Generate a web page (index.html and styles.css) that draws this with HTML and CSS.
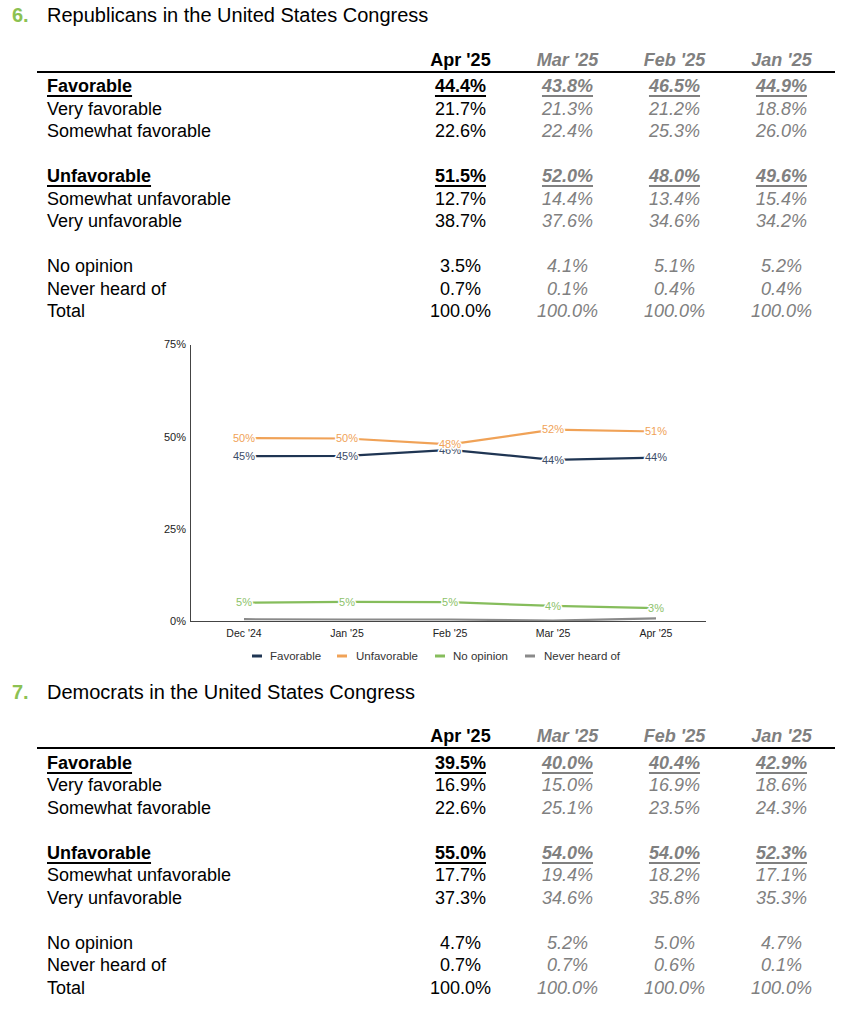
FILE: index.html
```html
<!DOCTYPE html>
<html lang="en">
<head>
<meta charset="utf-8">
<title>Congress favorability</title>
<link rel="stylesheet" href="styles.css">
</head>
<body>
<section class="block">
  <h2 class="title"><span class="num">6.</span><span>Republicans in the United States Congress</span></h2>
  <table class="tbl">
    <colgroup><col class="c-label"><col><col><col><col></colgroup>
    <thead>
      <tr><th></th><th class="cur">Apr '25</th><th class="old">Mar '25</th><th class="old">Feb '25</th><th class="old">Jan '25</th></tr>
    </thead>
    <tbody>
      <tr class="first"><td class="lbl"><b class="u">Favorable</b></td><td class="cur"><b class="u">44.4%</b></td><td class="old"><b class="u">43.8%</b></td><td class="old"><b class="u">46.5%</b></td><td class="old"><b class="u">44.9%</b></td></tr>
      <tr><td class="lbl">Very favorable</td><td class="cur">21.7%</td><td class="old">21.3%</td><td class="old">21.2%</td><td class="old">18.8%</td></tr>
      <tr><td class="lbl">Somewhat favorable</td><td class="cur">22.6%</td><td class="old">22.4%</td><td class="old">25.3%</td><td class="old">26.0%</td></tr>
      <tr class="gap"><td colspan="5"></td></tr>
      <tr><td class="lbl"><b class="u">Unfavorable</b></td><td class="cur"><b class="u">51.5%</b></td><td class="old"><b class="u">52.0%</b></td><td class="old"><b class="u">48.0%</b></td><td class="old"><b class="u">49.6%</b></td></tr>
      <tr><td class="lbl">Somewhat unfavorable</td><td class="cur">12.7%</td><td class="old">14.4%</td><td class="old">13.4%</td><td class="old">15.4%</td></tr>
      <tr><td class="lbl">Very unfavorable</td><td class="cur">38.7%</td><td class="old">37.6%</td><td class="old">34.6%</td><td class="old">34.2%</td></tr>
      <tr class="gap"><td colspan="5"></td></tr>
      <tr><td class="lbl">No opinion</td><td class="cur">3.5%</td><td class="old">4.1%</td><td class="old">5.1%</td><td class="old">5.2%</td></tr>
      <tr><td class="lbl">Never heard of</td><td class="cur">0.7%</td><td class="old">0.1%</td><td class="old">0.4%</td><td class="old">0.4%</td></tr>
      <tr><td class="lbl">Total</td><td class="cur">100.0%</td><td class="old">100.0%</td><td class="old">100.0%</td><td class="old">100.0%</td></tr>
    </tbody>
  </table>
  <svg class="chart" width="851" height="354" viewBox="0 322 851 354" xmlns="http://www.w3.org/2000/svg">
    <g class="axis-lbl y-lbl">
      <text x="186" y="347">75%</text>
      <text x="186" y="440">50%</text>
      <text x="186" y="532">25%</text>
      <text x="186" y="624">0%</text>
    </g>
    <g class="axis-lbl x-lbl">
      <text x="244" y="635.5">Dec '24</text>
      <text x="347" y="635.5">Jan '25</text>
      <text x="450" y="635.5">Feb '25</text>
      <text x="553" y="635.5">Mar '25</text>
      <text x="656" y="635.5">Apr '25</text>
    </g>
    <polyline class="ln gray" points="244,618.2 347,618.5 450,618.5 553,619.6 656,617.4"/>
    <line class="axis" x1="190.5" y1="344" x2="190.5" y2="620.5"/>
    <line class="axis" x1="190" y1="620.5" x2="706" y2="620.5"/>
    <polyline class="ln green" points="244,601.6 347,600.9 450,601.2 553,604.9 656,607.1"/>
    <polyline class="ln navy" points="244,455.1 347,454.8 450,448.9 553,458.8 656,456.6"/>
    <polyline class="ln orange" points="244,437.1 347,437.5 450,443.4 553,428.6 656,430.5"/>
    <g class="dl dl-green">
      <text x="244" y="605.4">5%</text>
      <text x="347" y="604.7">5%</text>
      <text x="450" y="605">5%</text>
      <text x="553" y="608.7">4%</text>
      <text x="656" y="610.9">3%</text>
    </g>
    <g class="dl dl-navy">
      <text x="244" y="458.9">45%</text>
      <text x="347" y="458.6">45%</text>
      <text x="450" y="452.7">46%</text>
      <text x="553" y="462.6">44%</text>
      <text x="656" y="460.4">44%</text>
    </g>
    <g class="dl dl-orange">
      <text x="244" y="440.9">50%</text>
      <text x="347" y="441.3">50%</text>
      <text x="450" y="447.2">48%</text>
      <text x="553" y="432.4">52%</text>
      <text x="656" y="434.3">51%</text>
    </g>
    <g class="legend">
      <line class="lg navy" x1="252" y1="655" x2="262" y2="655"/>
      <text x="270" y="659">Favorable</text>
      <line class="lg orange" x1="337" y1="655" x2="347" y2="655"/>
      <text x="356" y="659">Unfavorable</text>
      <line class="lg green" x1="435" y1="655" x2="445" y2="655"/>
      <text x="453" y="659">No opinion</text>
      <line class="lg gray" x1="525" y1="655" x2="535" y2="655"/>
      <text x="544" y="659">Never heard of</text>
    </g>
  </svg>
</section>
<section class="block">
  <h2 class="title"><span class="num">7.</span><span>Democrats in the United States Congress</span></h2>
  <table class="tbl">
    <colgroup><col class="c-label"><col><col><col><col></colgroup>
    <thead>
      <tr><th></th><th class="cur">Apr '25</th><th class="old">Mar '25</th><th class="old">Feb '25</th><th class="old">Jan '25</th></tr>
    </thead>
    <tbody>
      <tr class="first"><td class="lbl"><b class="u">Favorable</b></td><td class="cur"><b class="u">39.5%</b></td><td class="old"><b class="u">40.0%</b></td><td class="old"><b class="u">40.4%</b></td><td class="old"><b class="u">42.9%</b></td></tr>
      <tr><td class="lbl">Very favorable</td><td class="cur">16.9%</td><td class="old">15.0%</td><td class="old">16.9%</td><td class="old">18.6%</td></tr>
      <tr><td class="lbl">Somewhat favorable</td><td class="cur">22.6%</td><td class="old">25.1%</td><td class="old">23.5%</td><td class="old">24.3%</td></tr>
      <tr class="gap"><td colspan="5"></td></tr>
      <tr><td class="lbl"><b class="u">Unfavorable</b></td><td class="cur"><b class="u">55.0%</b></td><td class="old"><b class="u">54.0%</b></td><td class="old"><b class="u">54.0%</b></td><td class="old"><b class="u">52.3%</b></td></tr>
      <tr><td class="lbl">Somewhat unfavorable</td><td class="cur">17.7%</td><td class="old">19.4%</td><td class="old">18.2%</td><td class="old">17.1%</td></tr>
      <tr><td class="lbl">Very unfavorable</td><td class="cur">37.3%</td><td class="old">34.6%</td><td class="old">35.8%</td><td class="old">35.3%</td></tr>
      <tr class="gap"><td colspan="5"></td></tr>
      <tr><td class="lbl">No opinion</td><td class="cur">4.7%</td><td class="old">5.2%</td><td class="old">5.0%</td><td class="old">4.7%</td></tr>
      <tr><td class="lbl">Never heard of</td><td class="cur">0.7%</td><td class="old">0.7%</td><td class="old">0.6%</td><td class="old">0.1%</td></tr>
      <tr><td class="lbl">Total</td><td class="cur">100.0%</td><td class="old">100.0%</td><td class="old">100.0%</td><td class="old">100.0%</td></tr>
    </tbody>
  </table>
</section>
</body>
</html>
```
FILE: styles.css
```css
html, body {
  margin: 0;
  padding: 0;
  background: #fff;
}
body {
  font-family: "Liberation Sans", Arial, sans-serif;
  color: #000;
}
.block {
  display: block;
}
.title {
  display: flex;
  margin: 0;
  padding: 3px 0 0 12px;
  height: 24px;
  font-size: 20px;
  line-height: 24px;
  font-weight: normal;
}
.title .num {
  width: 35px;
  color: #8cc152;
  font-weight: bold;
}
.tbl {
  margin: 22.5px 0 0 37px;
  width: 798px;
  table-layout: fixed;
  border-collapse: separate;
  border-spacing: 0;
  font-size: 18px;
}
.tbl col.c-label {
  width: 370px;
}
.tbl th {
  padding: 0;
  height: 21px;
  line-height: 21px;
  font-weight: bold;
  text-align: center;
  border-bottom: 2px solid #000;
}
.tbl th.old {
  font-style: italic;
  color: #808080;
}
.tbl td {
  padding: 0;
  height: 22.5px;
  line-height: 22.5px;
  text-align: center;
  white-space: nowrap;
}
.tbl tr.first td {
  padding-top: 2.5px;
}
.tbl td.lbl {
  text-align: left;
  padding-left: 10px;
}
.tbl td.old {
  font-style: italic;
  color: #808080;
}
.tbl tr.gap td {
  height: 22.5px;
}
.u {
  text-decoration: underline;
  text-decoration-thickness: 2px;
  text-underline-offset: 3px;
}
.chart {
  display: block;
}
.axis {
  stroke: #444;
  stroke-width: 1;
}
.axis-lbl text {
  font-family: "Liberation Sans", Arial, sans-serif;
  font-size: 10.5px;
  fill: #222;
}
.y-lbl text {
  text-anchor: end;
  font-size: 11px;
}
.x-lbl text {
  text-anchor: middle;
}
.ln {
  fill: none;
  stroke-width: 2.2;
  stroke-linejoin: round;
}
.navy { stroke: #1f3553; }
.orange { stroke: #f0a257; }
.green { stroke: #86bd5c; }
.gray { stroke: #8a8a8a; }
.dl text {
  font-family: "Liberation Sans", Arial, sans-serif;
  font-size: 11px;
  text-anchor: middle;
  stroke: #fff;
  stroke-width: 3px;
  paint-order: stroke;
  stroke-linejoin: round;
}
.dl-navy text { fill: #3d4d68; }
.dl-orange text { fill: #f0a257; }
.dl-green text { fill: #8cc26a; }
.legend text {
  font-family: "Liberation Sans", Arial, sans-serif;
  font-size: 11.5px;
  fill: #333;
}
.lg {
  stroke-width: 3;
}
```
